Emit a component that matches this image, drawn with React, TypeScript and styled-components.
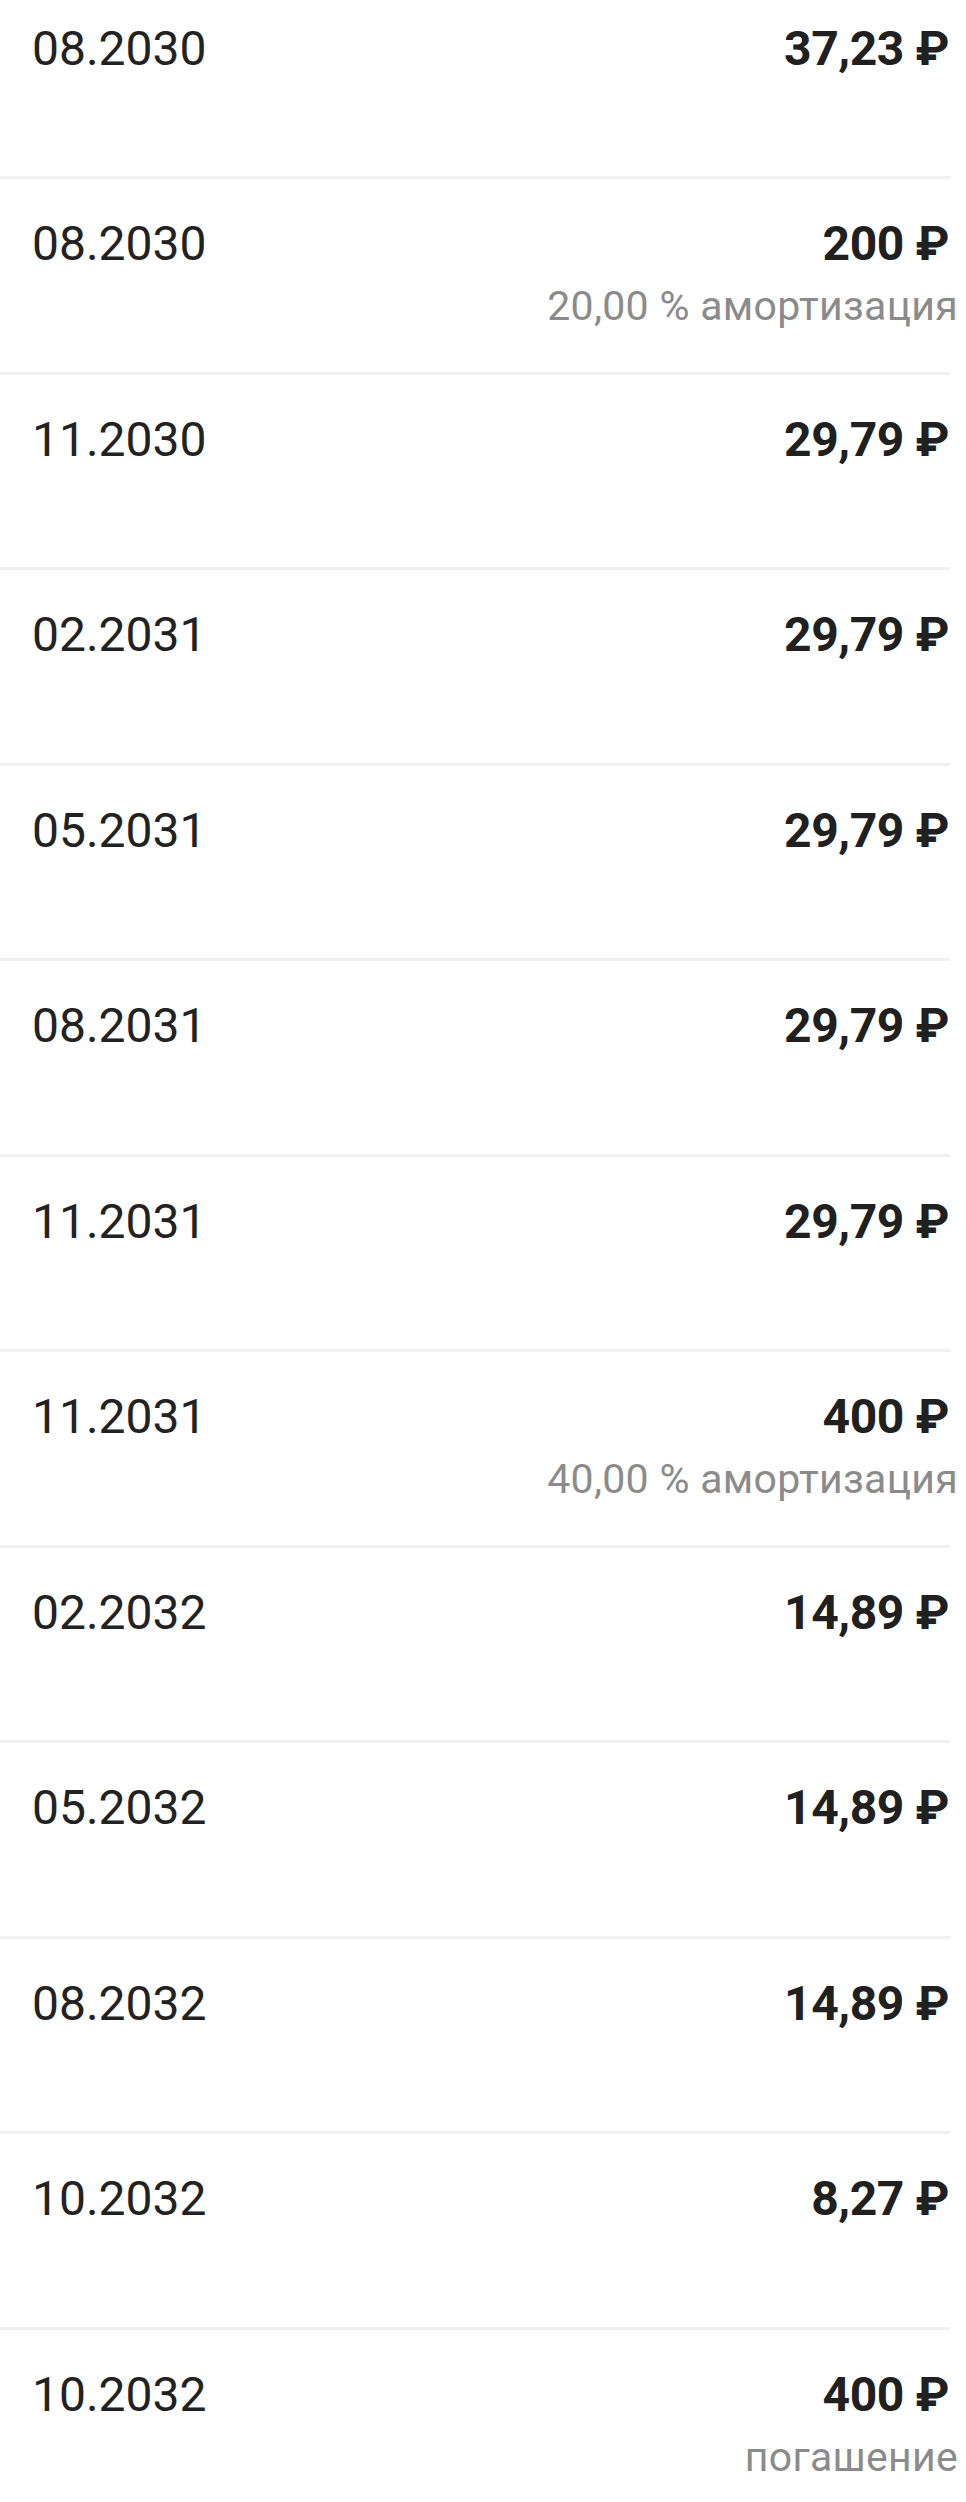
import React from "react";
import styled, { createGlobalStyle } from "styled-components";

const GlobalStyle = createGlobalStyle`
  html, body {
    margin: 0;
    padding: 0;
    background: #ffffff;
    font-family: Roboto, "Noto Sans", "Liberation Sans", sans-serif;
    overflow: hidden;
  }
`;

const List = styled.div`
  width: 950px;
  margin-top: -16.5px;
  display: flex;
  flex-direction: column;
`;

const Row = styled.div`
  box-sizing: border-box;
  height: 195.5px;
  padding: 37px 1px 0 32px;
  display: flex;
  justify-content: space-between;
  align-items: flex-start;
  border-bottom: 3px solid #f0f0f2;
`;

const DateText = styled.div`
  font-size: 48px;
  line-height: 56px;
  font-weight: 400;
  color: #222222;
`;

const AmountCol = styled.div`
  display: flex;
  flex-direction: column;
  align-items: flex-end;
`;

const Amount = styled.div`
  font-size: 48px;
  line-height: 56px;
  font-weight: 700;
  letter-spacing: -0.4px;
  color: #202020;
  white-space: nowrap;
`;

const Note = styled.div`
  margin-top: 10px;
  margin-right: -9px;
  font-size: 41px;
  line-height: 48px;
  letter-spacing: 0.3px;
  color: #8b8b8b;
  white-space: nowrap;
`;

type Payment = {
  date: string;
  amount: string;
  note?: string;
};

const payments: Payment[] = [
  { date: "08.2030", amount: "37,23 ₽" },
  { date: "08.2030", amount: "200 ₽", note: "20,00 % амортизация" },
  { date: "11.2030", amount: "29,79 ₽" },
  { date: "02.2031", amount: "29,79 ₽" },
  { date: "05.2031", amount: "29,79 ₽" },
  { date: "08.2031", amount: "29,79 ₽" },
  { date: "11.2031", amount: "29,79 ₽" },
  { date: "11.2031", amount: "400 ₽", note: "40,00 % амортизация" },
  { date: "02.2032", amount: "14,89 ₽" },
  { date: "05.2032", amount: "14,89 ₽" },
  { date: "08.2032", amount: "14,89 ₽" },
  { date: "10.2032", amount: "8,27 ₽" },
  { date: "10.2032", amount: "400 ₽", note: "погашение" },
];

function App() {
  return (
    <>
      <GlobalStyle />
      <List>
        {payments.map((item, index) => (
          <Row key={index}>
            <DateText>{item.date}</DateText>
            <AmountCol>
              <Amount>{item.amount}</Amount>
              {item.note && <Note>{item.note}</Note>}
            </AmountCol>
          </Row>
        ))}
      </List>
    </>
  );
}

export default App;
